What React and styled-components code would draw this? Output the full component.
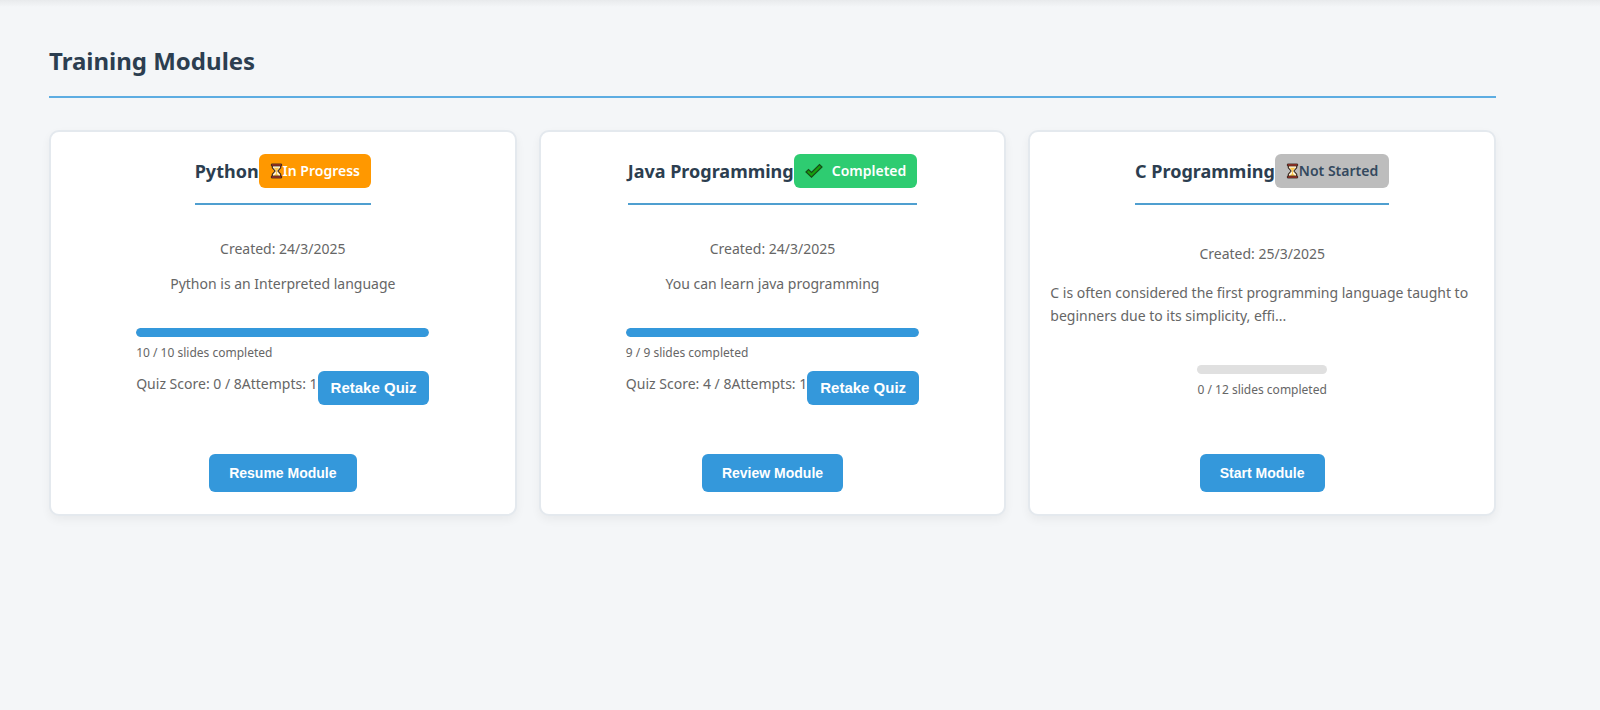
import React from "react";
import styled, { createGlobalStyle } from "styled-components";

const GlobalStyle = createGlobalStyle`
  *, *::before, *::after { box-sizing: border-box; }
  body {
    margin: 0;
    background: #f4f6f8;
    color: #666;
    font-family: "Segoe UI", "Noto Sans", sans-serif;
    font-size: 14px;
  }
`;

const Page = styled.main`
  min-height: 100vh;
  padding: 40px 104px 40px 49px;
  background: linear-gradient(#e8eaec, #f4f6f8 7px);
`;

const PageTitle = styled.h1`
  margin: 0 0 32px;
  padding-bottom: 14px;
  border-bottom: 2px solid #5dade2;
  color: #2c3e50;
  font-size: 24px;
  font-weight: 700;
  line-height: 42px;
`;

const ModuleGrid = styled.div`
  display: grid;
  grid-template-columns: repeat(3, minmax(0, 1fr));
  gap: 22px;
`;

const Card = styled.article`
  display: flex;
  flex-direction: column;
  align-items: center;
  justify-content: space-between;
  min-height: 386px;
  padding: 22px 20px;
  background: #fff;
  border: 2px solid #e4e9ee;
  border-radius: 10px;
  box-shadow: 0 4px 10px rgba(0, 0, 0, 0.05);
`;

const CardHeader = styled.header`
  display: flex;
  align-items: center;
  padding-bottom: 15px;
  border-bottom: 2px solid #4f9fd0;
`;

const CardTitle = styled.h2`
  margin: 0;
  color: #2c3e50;
  font-size: 18px;
  font-weight: 700;
  line-height: 24px;
`;

const Badge = styled.span`
  display: inline-flex;
  align-items: center;
  gap: ${(p) => p.$gap || 0}px;
  height: 34px;
  padding: 0 11px;
  border-radius: 6px;
  background: ${(p) => p.$background};
  color: ${(p) => p.$color || "#fff"};
  font-size: 14px;
  font-weight: 600;
  line-height: 18px;
  white-space: nowrap;
`;

const Info = styled.div`
  display: flex;
  flex-direction: column;
  align-items: center;
  gap: ${(p) => (p.$long ? 16 : 12)}px;
  line-height: 23px;
`;

const Text = styled.p`
  margin: 0;
`;

const Progress = styled.section`
  display: flex;
  flex-direction: column;
`;

const Track = styled.div`
  height: 9px;
  overflow: hidden;
  border-radius: 5px;
  background: #e0e0e0;
`;

const Fill = styled.div`
  height: 100%;
  border-radius: 5px;
  background: #3498db;
`;

const SlideCount = styled.p`
  margin: 6px 0 0;
  font-size: 12px;
  line-height: 20px;
`;

const QuizRow = styled.div`
  display: flex;
  margin-top: 8px;
  line-height: 25px;
`;

const Button = styled.button`
  border: 0;
  border-radius: 6px;
  background: #3498db;
  color: #fff;
  font-family: "Liberation Sans", Arial, sans-serif;
  font-weight: 700;
  cursor: pointer;
`;

const QuizButton = styled(Button)`
  height: 34px;
  padding: 0 13px;
  font-size: 15px;
`;

const ModuleButton = styled(Button)`
  height: 38px;
  margin-top: 17px;
  padding: 0 20px;
  font-size: 14px;
`;

function Hourglass() {
  return (
    <svg width="13" height="18" viewBox="0 0 14 18" aria-hidden="true">
      <path d="M2.5 3v2.5L5.5 9 2.5 12.500V15h9v-2.500L8.500 9l3-3.500V3z" fill="#fff3d6" stroke="#35251c" strokeWidth="1.200" />
      <path d="M4 5.500h6L7.500 8.500V12l2.500 2.500H4L6.500 12V8.500z" fill="#fcc64a" />
      <path d="M1.500 1.500h11v2h-11zM1.500 14.500h11v2h-11z" fill="#d4382d" stroke="#35251c" strokeWidth="1" />
    </svg>
  );
}

function Check() {
  return (
    <svg width="18" height="16" viewBox="0 0 18 16" aria-hidden="true">
      <path d="M1 9l2.500-2.500L6.500 9.500 14.500 1.500 17 4 6.500 14.200z" fill="#16a10c" stroke="#174b19" strokeWidth="1.200" />
    </svg>
  );
}

const STATUS = {
  progress: { label: "In Progress", icon: Hourglass, background: "#ff9800" },
  completed: { label: "Completed", icon: Check, background: "#2ecc71", gap: 9 },
  idle: { label: "Not Started", icon: Hourglass, background: "#bdbdbd", color: "#34495e" },
};

const MODULES = [
  {
    title: "Python", status: "progress", created: "24/3/2025",
    description: "Python is an Interpreted language",
    done: 10, total: 10, quiz: { score: 0, outOf: 8, attempts: 1 }, action: "Resume Module",
  },
  {
    title: "Java Programming", status: "completed", created: "24/3/2025",
    description: "You can learn java programming",
    done: 9, total: 9, quiz: { score: 4, outOf: 8, attempts: 1 }, action: "Review Module",
  },
  {
    title: "C Programming", status: "idle", created: "25/3/2025", long: true,
    description: "C is often considered the first programming language taught to beginners due to its simplicity, effi...",
    done: 0, total: 12, action: "Start Module",
  },
];

function ModuleCard({ module }) {
  const { title, created, description, long, done, total, quiz, action } = module;
  const status = STATUS[module.status];
  const Icon = status.icon;
  return (
    <Card>
      <CardHeader>
        <CardTitle>{title}</CardTitle>
        <Badge $background={status.background} $color={status.color} $gap={status.gap}>
          <Icon />
          {status.label}
        </Badge>
      </CardHeader>
      <Info $long={long}>
        <Text>{`Created: ${created}`}</Text>
        <Text>{description}</Text>
      </Info>
      <Progress>
        <Track role="progressbar" aria-label={`${title} slides`} aria-valuenow={done} aria-valuemax={total}>
          <Fill style={{ width: `${(done / total) * 100}%` }} />
        </Track>
        <SlideCount>{`${done} / ${total} slides completed`}</SlideCount>
        {quiz && (
          <QuizRow>
            <span>{`Quiz Score: ${quiz.score} / ${quiz.outOf}`}</span>
            <span>{`Attempts: ${quiz.attempts}`}</span>
            <QuizButton type="button">Retake Quiz</QuizButton>
          </QuizRow>
        )}
      </Progress>
      <ModuleButton type="button">{action}</ModuleButton>
    </Card>
  );
}

export default function App() {
  return (
    <>
      <GlobalStyle />
      <Page>
        <PageTitle>Training Modules</PageTitle>
        <ModuleGrid>
          {MODULES.map((module) => (
            <ModuleCard key={module.title} module={module} />
          ))}
        </ModuleGrid>
      </Page>
    </>
  );
}
